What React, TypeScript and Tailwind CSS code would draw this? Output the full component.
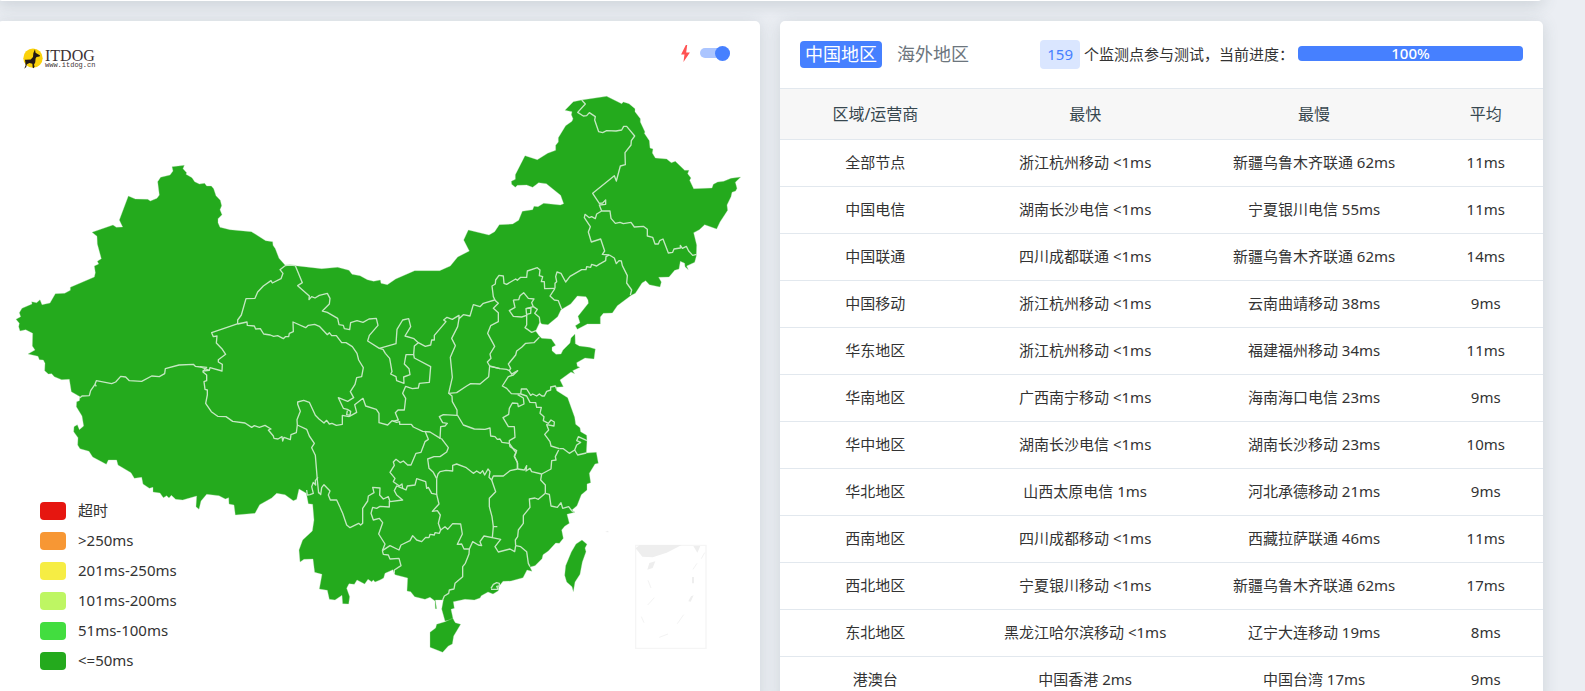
import React, { useState } from "react";

type Region = "china" | "overseas";

interface ResultRow {
  area: string;
  fastest: string;
  slowest: string;
  average: string;
}

const results: ResultRow[] = [
  { area: "全部节点", fastest: "浙江杭州移动 <1ms", slowest: "新疆乌鲁木齐联通 62ms", average: "11ms" },
  { area: "中国电信", fastest: "湖南长沙电信 <1ms", slowest: "宁夏银川电信 55ms", average: "11ms" },
  { area: "中国联通", fastest: "四川成都联通 <1ms", slowest: "新疆乌鲁木齐联通 62ms", average: "14ms" },
  { area: "中国移动", fastest: "浙江杭州移动 <1ms", slowest: "云南曲靖移动 38ms", average: "9ms" },
  { area: "华东地区", fastest: "浙江杭州移动 <1ms", slowest: "福建福州移动 34ms", average: "11ms" },
  { area: "华南地区", fastest: "广西南宁移动 <1ms", slowest: "海南海口电信 23ms", average: "9ms" },
  { area: "华中地区", fastest: "湖南长沙电信 <1ms", slowest: "湖南长沙移动 23ms", average: "10ms" },
  { area: "华北地区", fastest: "山西太原电信 1ms", slowest: "河北承德移动 21ms", average: "9ms" },
  { area: "西南地区", fastest: "四川成都移动 <1ms", slowest: "西藏拉萨联通 46ms", average: "11ms" },
  { area: "西北地区", fastest: "宁夏银川移动 <1ms", slowest: "新疆乌鲁木齐联通 62ms", average: "17ms" },
  { area: "东北地区", fastest: "黑龙江哈尔滨移动 <1ms", slowest: "辽宁大连移动 19ms", average: "8ms" },
  { area: "港澳台", fastest: "中国香港 2ms", slowest: "中国台湾 17ms", average: "9ms" },
];

const legend = [
  { label: "超时", color: "bg-[#e61610]" },
  { label: ">250ms", color: "bg-[#f79734]" },
  { label: "201ms-250ms", color: "bg-[#f6ed44]" },
  { label: "101ms-200ms", color: "bg-[#bef663]" },
  { label: "51ms-100ms", color: "bg-[#42dd3f]" },
  { label: "<=50ms", color: "bg-[#24aa1d]" },
];

const mainland =
  "48,958 62,950 58,938 66,925 96,912 95,905 110,908 120,899 126,914 150,909 166,881 194,880 211,871 211,862 283,831 286,818 283,798 296,792 292,784 304,776 292,732 291,709 276,697 339,675 349,682 368,681 358,660 385,588 406,597 443,598 451,603 471,595 478,585 473,545 482,532 510,525 519,513 516,500 553,496 549,506 560,518 558,523 576,533 584,545 598,552 614,550 620,558 634,558 641,566 648,587 661,601 665,617 660,629 666,644 654,656 654,668 660,682 690,689 754,695 797,722 818,725 819,736 826,746 837,775 855,795 " +
  "886,797 965,806 1013,802 1047,811 1056,823 1080,827 1102,839 1121,844 1141,840 1143,850 1162,854 1187,837 1244,812 1319,812 1351,798 1373,771 1408,753 1391,720 1405,690 1467,705 1484,695 1498,674 1538,672 1556,661 1567,634 1598,629 1602,619 1614,620 1631,610 1681,615 1691,611 1682,586 1639,551 1616,548 1598,562 1580,555 1552,556 1546,562 1535,553 1534,544 1546,538 1546,524 1575,467 1612,479 1643,460 1667,451 1667,436 1675,426 1675,413 1697,377 1716,364 1719,356 1714,344 1716,335 1695,331 1720,305 1745,300 1820,289 1865,311 1870,306 1887,311 1905,326 1905,335 1921,356 1921,366 1935,396 1933,400 1948,422 1950,444 1959,447 1957,459 1966,474 2000,477 2014,488 2026,484 2054,511 2067,511 2063,521 2073,534 2069,541 2081,566 2136,564 2140,553 2153,546 2171,544 2193,535 2222,531 " +
  "2206,547 2211,565 2207,573 2196,577 2193,590 2181,615 2183,631 2160,666 2150,687 2114,674 2098,689 2081,698 2090,735 2089,768 2084,787 2060,798 2065,809 2055,800 2054,790 2041,784 2037,807 2024,811 2007,831 1976,832 1984,846 1980,861 1948,854 1937,842 1926,849 1906,880 1894,886 1852,917 1837,939 1810,940 1801,951 1801,972 1762,972 1732,988 1726,977 1740,968 1734,949 1765,910 1764,900 1758,890 1732,888 1712,912 1683,929 1673,950 1644,974 1625,972 1620,965 1607,993 1618,1008 1625,1015 1654,1017 1667,1036 1656,1042 1656,1052 1668,1063 1683,1062 1689,1050 1710,1029 1713,1014 1725,1002 1726,1031 1738,1038 1768,1042 1786,1047 1782,1077 1755,1074 1730,1088 1732,1099 1740,1102 1718,1112 1724,1121 1713,1116 1680,1140 1690,1160 1668,1162 1670,1172 1703,1193 1724,1252 1727,1273 1740,1283 1742,1295 1760,1306 1761,1322 1759,1359 1789,1357 1795,1390 " +
  "1785,1392 1768,1420 1772,1448 1761,1452 1761,1470 1744,1484 1731,1517 1716,1530 1724,1537 1701,1543 1708,1570 1694,1579 1685,1590 1690,1615 1678,1630 1667,1629 1645,1653 1629,1664 1626,1676 1605,1697 1590,1701 1596,1714 1581,1710 1569,1733 1533,1743 1509,1744 1496,1760 1495,1772 1479,1782 1464,1776 1444,1787 1440,1794 1423,1800 1395,1798 1360,1805 1363,1825 1353,1828 1360,1860 1335,1863 1325,1827 1330,1800 1306,1800 1310,1826 1306,1826 1305,1803 1290,1792 1275,1798 1244,1790 1232,1775 1221,1773 1223,1734 1185,1724 1179,1709 1155,1720 1151,1734 1140,1740 1125,1746 1120,1740 1115,1745 1104,1738 1094,1752 1071,1740 1063,1753 1047,1751 1040,1765 1049,1790 1046,1812 1028,1811 1026,1786 1005,1800 988,1798 982,1771 958,1767 966,1723 944,1717 939,1677 912,1678 900,1686 897,1650 908,1620 937,1593 942,1560 938,1513 925,1511 919,1480 " +
  "897,1467 890,1498 880,1502 855,1484 830,1480 815,1494 779,1514 765,1540 706,1545 702,1515 687,1512 686,1493 676,1497 657,1487 620,1483 603,1503 597,1528 588,1520 590,1488 566,1495 548,1500 527,1498 514,1486 507,1494 500,1487 490,1493 480,1479 459,1476 459,1462 448,1465 429,1452 425,1432 403,1435 393,1418 354,1395 350,1380 325,1380 319,1393 278,1371 267,1354 240,1346 233,1335 234,1313 221,1295 222,1280 232,1274 238,1289 251,1278 246,1248 229,1220 230,1205 238,1202 240,1190 214,1175 208,1138 185,1139 163,1130 155,1121 145,1122 134,1112 135,1090 130,1080 118,1079 114,1069 84,1062 105,1050 97,1038 98,1000 77,989 60,993 56,980 58,970";

// Province borders, grouped by the tile of the map they sit in
const borders = [
  {
    tile: "translate(0 450)",
    lines: [
      "240,743 246,738 268,737 272,722 285,703 289,692 335,701 347,696 362,679 377,681 388,692 425,694 455,678 478,680 494,671 496,656 537,645 580,643 586,649 602,651 628,661 630,653 666,663 667,643 655,636 655,629 677,613 667,598 649,579 651,558 640,560 635,548 714,521",
      "285,703 289,709",
      "628,661 608,663",
    ],
  },
  {
    tile: "translate(600 690)",
    lines: [
      "255,107 240,119 249,130 243,146 217,159 213,152 190,168 173,186 165,205 138,206 124,255 113,270 113,282",
      "255,107 270,105 286,107",
      "113,282 141,276 142,286 163,288 167,297 181,296 191,312 211,315 221,319 233,317 250,326 256,320 266,320 268,310 280,305 279,276 317,293 325,286 344,283 358,289 382,314 388,308 395,317 409,317 425,338 438,338 457,350 471,370 476,390 490,413 485,440 470,443 465,463 451,485 461,503 443,514 415,503 430,535 442,538 452,544 450,556 440,554 442,542",
      "447,560 427,556 427,583 409,586 396,580 388,582 380,571 372,579 357,567 346,556 328,517 311,511 293,516 293,523 301,544 291,569 292,585",
      "447,560 470,547 464,524 489,505 497,528 529,538 537,550 537,578 563,585 576,572 590,577 599,575 599,583 634,583 640,591 668,604 690,606 722,626",
      "286,107 307,158 293,167 328,198 327,209 335,200 345,204 358,196 382,190 390,205 388,222 367,243 382,247 413,265 417,284 430,286 433,296 449,299 452,278 471,272 489,277 507,267 529,265 534,286 508,316 503,333 538,355 588,341 591,298 608,270 626,266 632,290 615,318 642,326 655,338 676,349 692,345 695,330 703,330 703,316 738,275 731,270 741,262 757,268 777,256 777,266 790,254 810,258 820,224 840,230 850,220 884,210",
      "538,355 549,358 556,370 569,385 576,425 572,432 588,440 590,452 612,460 611,441 630,434 627,416 613,402 618,374 641,374 643,348 655,338",
      "641,374 643,384 692,410 688,457 658,460 655,474 637,476 617,469 608,490 617,505 613,540 594,540 586,548 595,570 578,574",
      "777,266 773,290 755,325 766,347 751,382 757,442 746,490 756,498 757,515 771,540 771,556",
      "746,490 770,488 800,468 812,461 840,462 866,440 869,408 900,416",
      "884,210 895,220 880,235 895,248 895,275 872,287 863,310 884,349 870,372 873,385 862,396 869,408",
      "771,556 730,554 718,560 728,578 742,580 735,588 722,590 720,626",
      "8,425 20,435 20,452 12,455 15,478 22,480 22,495 17,520 34,545 53,559 78,560 98,574 135,579 155,592 163,587 178,592 195,586 213,597 205,600 220,618 222,625 234,627 246,620 248,633 252,622 271,629 273,614 289,608 292,585",
      "8,425 20,412 0,410",
      "292,585 320,598 328,618 343,640 335,653 346,676 352,750 356,790",
    ],
  },
  {
    tile: "translate(0 1110)",
    lines: [
      "955,366 962,374 965,353 972,344 990,363 985,375 991,390 1010,390 1020,412",
      "954,322 946,332 947,345 940,337 935,350 940,370 930,374 922,375 920,360",
    ],
  },
  {
    tile: "translate(1350 240)",
    lines: [
      "395,60 406,72 383,97 400,108 410,107 418,98 436,110 434,120 446,155 458,158 470,152 498,153 515,150 521,139 530,139 554,168 544,182 543,195 525,218 526,254 511,258 499,303 493,287 428,340 448,370 458,369 467,360 467,373 448,375 455,393",
      "455,393 480,393 483,415 496,430 510,427 520,431 543,427 553,441 580,439 592,448 592,468 608,472 615,492 625,492 629,482 639,477 655,519 668,517 672,507 691,504 691,496 697,505 709,499 716,513 728,526 740,523",
      "455,393 440,402 436,416 425,410 418,413 405,403 403,413 421,440 415,456 424,486 452,477 464,513 457,523 478,525",
      "478,525 468,530 467,542 447,553 440,558 425,553 422,562 410,560 408,569 395,569 360,589 347,606 333,580 321,576 317,590 320,605 315,610 315,625",
      "478,525 493,534 499,551 507,542 514,543 517,557 532,587 530,609 545,630 541,645",
      "315,625 284,626 283,605 274,605 278,590 268,587 270,570 262,563 232,573 230,592 212,592 202,601 197,597 170,613 162,610 160,588 147,586 137,600 136,612 126,618 130,650 135,660",
      "315,625 300,648 313,660 325,662 335,688",
      "190,660 206,659 210,647 221,638 235,655 252,657 245,668 250,680 228,686 230,706 215,711 190,709 178,692 195,682 190,660",
      "228,686 243,684 242,700 230,703 230,735 225,743 245,757 258,752",
      "250,680 262,688 254,700 268,712 270,728",
    ],
  },
  {
    tile: "translate(1140 750)",
    lines: [
      "478,262 462,278 437,280 425,292 410,303 407,315 385,342 392,355 388,362 380,358 360,356 330,349",
      "388,362 395,372 413,362 400,375 385,380 367,408 380,415 394,431 422,432",
      "422,432 424,417 440,417 452,436 458,432 470,438 478,432 486,438 493,438 500,424 512,420 512,411 526,408 530,418",
      "413,434 430,444 432,462 415,470 413,460 397,459 388,475 386,493 369,503 385,530 403,530 405,562 388,572 388,580",
      "422,432 440,438 450,457 467,458 470,472 484,472 480,490 492,500 490,512 505,520 513,510 523,516 522,528 500,524 506,540 494,553 510,575 513,588 538,596",
      "538,596 550,596 568,610 584,600 593,615 619,609",
      "584,600 590,585 602,577 590,572 595,560 621,572",
      "232,495 250,525 283,537 315,538 330,534 332,558 345,560 352,568 360,567 366,577 388,580",
      "388,580 402,600 408,608 403,620 412,636 412,656",
    ],
  },
  {
    tile: "translate(840 1200)",
    lines: [
      "435,93 445,118 435,125 423,157 408,160 393,195 383,195 370,183 361,188 348,178 340,186 343,196 330,217 345,235 340,245 358,258 366,252 368,265 378,270 382,258 405,255 410,236 437,245 440,265 445,262 455,280 470,283 470,236",
      "484,115 505,143 500,156 480,170 462,170 443,177 447,205 460,217 470,236",
      "470,236 474,222 480,215 498,211 518,213 518,196 530,192 557,202 580,220 590,213 601,220 608,212 614,225 624,207 630,215 627,232 635,240 640,228 670,228 690,212 713,207",
      "688,130 690,140 710,152 703,168 713,190 713,207",
      "713,207 733,210 740,197 738,213 750,205 755,215 785,222",
      "785,222 813,207 815,182 828,180 826,170 836,150",
      "785,222 782,240 796,255 796,280",
      "796,280 808,283 813,318 832,322 843,308 848,325 866,320 876,333 884,337",
      "796,280 775,298 765,294 748,297 750,322 730,347 730,370 715,390 713,410 706,420 707,437",
      "635,240 647,275 628,295 628,320 636,350 640,380 652,380",
      "640,380 637,413 662,418 645,440 655,456 690,447 704,455 707,437",
      "707,437 722,440 740,455 745,490 750,500",
      "637,413 612,408 600,425 605,437 595,435 578,425 568,447 552,447 545,432 532,433 547,402 542,372 518,371 503,388 495,380 482,390",
      "470,283 477,312 457,334 472,332 481,345 475,370 482,390 478,400 465,398 463,405 450,403 447,413 437,412 425,425 410,420 398,407 390,422 363,435 357,450 330,437 307,452",
      "568,447 567,462 556,490 548,500 548,530 525,550 522,567 508,570 506,580 493,588 488,600",
      "307,452 315,432 296,402 308,368 298,355 280,360 273,340 278,322 290,325 300,319 328,321 328,303",
      "180,322 188,340 200,375 210,383 236,370 242,375 248,370 248,325 263,303 265,288 282,278 278,262 300,264 299,285 310,297 325,290 330,305 368,300 350,285 343,272 350,258 368,265",
      "307,452 310,463 325,465 330,477 357,475 363,497 343,510 343,520",
      "633,565 640,553 650,548 658,550 658,558 650,559 654,568 633,568",
    ],
  },
];

function ChinaMap() {
  return (
    <svg
      viewBox="-9 63 2289 2010"
      className="col-start-1 row-start-1 block w-full self-start"
      role="img"
      aria-label="中国地区延迟地图"
    >
      <g fill="#24aa1d" stroke="#b5e1b2" strokeWidth="1" strokeLinejoin="round">
        <polygon points={mainland} />
        <polygon points="1310,1873 1335,1865 1358,1855 1366,1868 1382,1873 1361,1908 1357,1932 1345,1938 1328,1957 1290,1942 1290,1897 1307,1884" />
        <polygon points="1746,1620 1761,1633 1755,1644 1758,1655 1747,1686 1740,1723 1725,1746 1720,1775 1716,1760 1700,1746 1694,1726 1697,1697 1714,1656 1728,1632" />
      </g>
      {borders.map((group) => (
        <g key={group.tile} transform={group.tile} fill="none" stroke="#c4e8c2" strokeWidth="4" strokeLinejoin="round">
          {group.lines.map((points) => (
            <polyline key={points} points={points} />
          ))}
        </g>
      ))}
      {/* South China Sea inset */}
      <g transform="translate(1620 1500)">
        <path d="M287 136H498V445H287Z" fill="none" stroke="#f5f5f5" strokeWidth="4" />
        <g fill="#eeeeee">
          <path d="M287 145L299 135H425L380 158L338 172L307 170Z" />
          <path d="M460 138H481L472 158Z" />
          <path d="M328 189L346 184L338 204L322 209Z" />
          <path d="M456 231H462V250H456Z" />
          <path d="M453 289L461 286L452 305L445 304Z" />
          <path d="M195 96L204 92L206 97Z" />
        </g>
        <path
          d="M494 158L484 176M471 190L459 208M324 241L333 264M343 293L323 315M304 350L312 368M431 344L412 371M384 402L358 412"
          stroke="#f3f3f3"
          strokeWidth="3"
          fill="none"
        />
      </g>
    </svg>
  );
}

function Logo() {
  return (
    <a href="#" className="flex items-center gap-0.5" aria-label="ITDOG">
      <svg viewBox="0 0 62 64" className="h-[21px] w-5">
        <circle cx="31" cy="31" r="30" fill="#fbd20b" />
        <path
          d="M37 3L39 14L53 23L51 26L42 27L39 32L38 44L34 51L36 57L33 62L30 60L29 48L20 46L12 50L10 58L4 64L8 53L7 42L6 36L10 36L24 35L31 27L32 16Z"
          fill="#231815"
        />
      </svg>
      <span className="flex flex-col pt-0.5 text-[#3e3233]">
        <span className="font-['Liberation_Serif',serif] text-base leading-3">ITDOG</span>
        <span className="font-['Liberation_Mono',monospace] text-[7px] leading-[7px]">www.itdog.cn</span>
      </span>
    </a>
  );
}

function MapCard() {
  const [fast, setFast] = useState(true);

  return (
    <section className="grid content-start rounded-[5px] bg-white shadow-[0_2px_16px_rgba(69,90,100,0.18)]">
      <ChinaMap />
      <div className="z-10 col-start-1 row-start-1 flex flex-col justify-between pt-6 pr-[30px] pb-4 pl-[26px]">
        <div className="flex items-start justify-between">
          <div className="pt-[3px]">
            <Logo />
          </div>
          <label className="flex h-4 items-center gap-2.5" aria-label="极速模式">
            <svg viewBox="0 0 26 50" className="h-[17px] w-[9px]">
              <path d="M14 0L0 28H10L7 50L26 22H15L18 0Z" fill="#ff5252" />
            </svg>
            <input
              type="checkbox"
              checked={fast}
              onChange={(e) => setFast(e.target.checked)}
              className="flex h-2.5 w-[30px] cursor-pointer appearance-none items-center rounded-full bg-[#abc5ff] before:block before:size-[15px] before:shrink-0 before:rounded-full before:bg-[#4680ff] checked:justify-end"
            />
          </label>
        </div>
        <ul className="flex flex-col pl-[17px]">
          {legend.map((item) => (
            <li key={item.label} className="flex h-[30px] items-center gap-3 text-[15px] leading-[30px] text-[#333]">
              <span className={`mt-0.5 h-[18px] w-[26px] rounded ${item.color}`} />
              {item.label}
            </li>
          ))}
        </ul>
      </div>
    </section>
  );
}

function ResultCard() {
  const [region, setRegion] = useState<Region>("china");
  const progress = 100;

  const tabClass = (value: Region) =>
    value === region ? "bg-[#4680ff] text-white" : "text-[#6c757d]";

  return (
    <section className="rounded-[5px] bg-white shadow-[0_2px_16px_rgba(69,90,100,0.18)]">
      <div className="flex h-[67px] items-center justify-between px-5">
        <div className="flex gap-2.5 text-lg leading-[27px]">
          <button type="button" onClick={() => setRegion("china")} className={`rounded px-[5px] ${tabClass("china")}`}>
            中国地区
          </button>
          <button type="button" onClick={() => setRegion("overseas")} className={`rounded px-[5px] ${tabClass("overseas")}`}>
            海外地区
          </button>
        </div>
        <div className="flex items-center text-[15px] text-[#333]">
          <span className="mr-1 rounded bg-[#dae6ff] px-[7px] leading-[29px] text-[#4680ff]">159</span>
          <span>个监测点参与测试，当前进度：</span>
          <div
            className="mb-0.5 ml-1 flex h-[15px] w-[225px]"
            role="progressbar"
            aria-label="当前进度"
            aria-valuenow={progress}
          >
            <div
              className="rounded bg-[#4680ff] text-center leading-[15px] font-medium text-white"
              style={{ width: `${progress}%` }}
            >
              {progress}%
            </div>
          </div>
        </div>
      </div>
      <table className="w-full table-fixed border-separate border-spacing-0 text-center">
        <thead>
          <tr className="h-[52px] bg-[#f7f7f7] text-base text-[#37474f] *:border-y *:border-[#e2e8ee] *:p-0 *:font-normal">
            <th className="w-1/4">区域/运营商</th>
            <th className="w-[30%]">最快</th>
            <th className="w-[30%]">最慢</th>
            <th className="w-[15%]">平均</th>
          </tr>
        </thead>
        <tbody>
          {results.map((row) => (
            <tr key={row.area} className="h-[47px] text-[15px] text-[#333] *:border-b *:border-[#e2e8ee] *:p-0 *:pb-0.5">
              <td>{row.area}</td>
              <td>{row.fastest}</td>
              <td>{row.slowest}</td>
              <td>{row.average}</td>
            </tr>
          ))}
        </tbody>
      </table>
    </section>
  );
}

export default function App() {
  return (
    <div className="h-screen overflow-hidden bg-[#ebeef3] font-['Noto_Sans','Noto_Sans_CJK_SC',sans-serif]">
      <main className="-mt-2 mr-[42px] -ml-[3px]">
        <div className="mb-5 h-[9px] rounded-b-[5px] bg-white shadow-[0_2px_16px_rgba(69,90,100,0.3)]" />
        <div className="grid grid-cols-2 gap-5">
          <MapCard />
          <ResultCard />
        </div>
      </main>
    </div>
  );
}
